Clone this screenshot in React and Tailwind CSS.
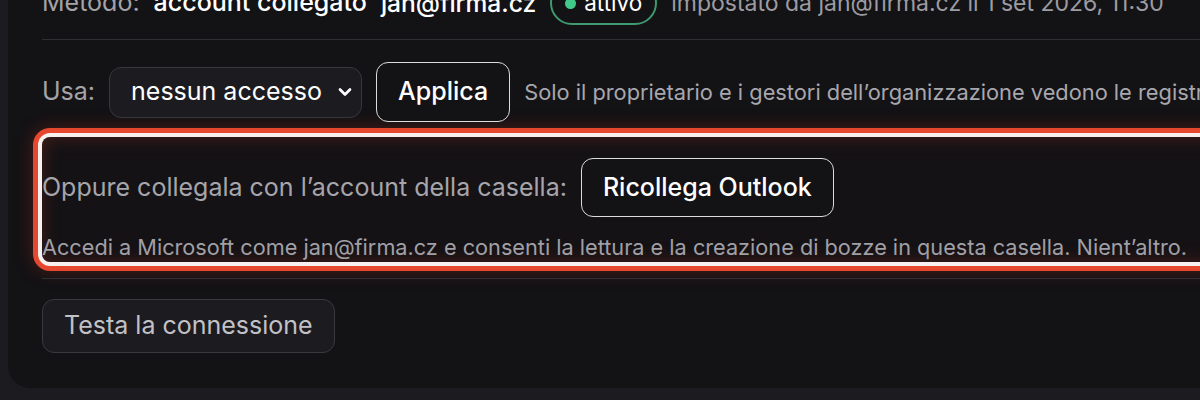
import React from "react";
import { ChevronDown } from "lucide-react";

const font = { fontFamily: "Inter, 'Noto Sans', sans-serif" };

const App = () => {
    return (
        <div className="h-[400px] w-[1200px] overflow-hidden bg-[#1c1b20]" style={font}>
            <div className="ml-[8px] -mt-[30px] w-[1400px] rounded-[22px] bg-[#131215] pl-[34px] pb-[35px]">
                {/* method row */}
                <div className="flex h-[70px] items-center gap-[14px] pb-[3px] border-b border-[#2f2e33]">
                    <span className="shrink-0 text-[25px] text-[#a3a3a8]">Metodo:</span>
                    <span className="shrink-0 text-[25px] font-medium text-white">account collegato</span>
                    <span className="shrink-0 text-[24.6px] font-medium text-white">jan@firma.cz</span>
                    <span className="flex h-[44px] shrink-0 items-center gap-[8px] rounded-full border-2 border-[#3f9a70] px-[13px] text-[22.5px] text-white">
                        <span className="h-[11px] w-[11px] rounded-full bg-[#41c98a]" />
                        attivo
                    </span>
                    <span className="whitespace-nowrap text-[23px] text-[#9d9ca2]">impostato da jan@firma.cz il 1 set 2026, 11:30</span>
                </div>

                {/* access row */}
                <div className="flex items-center gap-[14px] pt-[22px]">
                    <span className="shrink-0 text-[25px] text-[#a3a3a8]">Usa:</span>
                    <div className="flex h-[51px] w-[253px] shrink-0 items-center justify-between rounded-[12px] border border-[#38373c] bg-[#1c1b20] pl-[21px] pr-[6px] text-[25px] text-white">
                        nessun accesso
                        <ChevronDown size={20} strokeWidth={3.2} />
                    </div>
                    <button className="h-[60px] shrink-0 rounded-[12px] border-[1.5px] border-[#dcdcdc] bg-[#131215] px-[21px] text-[25px] font-medium text-white">
                        Applica
                    </button>
                    <span className="whitespace-nowrap text-[21.8px] text-[#a8a7ad]">
                        Solo il proprietario e i gestori dell’organizzazione vedono le registrazioni delle chiamate.
                    </span>
                </div>

                {/* highlighted relink section */}
                <div className="mt-[15px] rounded-[8px] bg-[#141215] pt-[21px] pb-[1px] shadow-[0_0_0_4px_#f6f1ee,0_0_0_9px_#e5482f,0_0_18px_9px_rgba(180,50,30,0.35),inset_0_0_18px_rgba(200,60,40,0.28)]">
                    <div className="flex items-center gap-[14px]">
                        <span className="shrink-0 text-[25px] text-[#a6a5ab]">Oppure collegala con l’account della casella:</span>
                        <button className="h-[59px] shrink-0 rounded-[12px] border-[1.5px] border-[#dcdcdc] bg-[#131215] px-[21px] text-[25px] font-medium text-white">
                            Ricollega Outlook
                        </button>
                    </div>
                    <p className="mt-[16px] whitespace-nowrap text-[21.7px] leading-[28px] text-[#a0a0a6]">
                        Accedi a Microsoft come jan@firma.cz e consenti la lettura e la creazione di bozze in questa casella. Nient’altro.
                    </p>
                </div>

                <div className="mt-[16px] border-t border-[#2f2e33] pt-[20px]">
                    <button className="h-[54px] rounded-[12px] border border-[#3a393f] bg-[#1c1b20] px-[21px] text-[25px] text-[#c2c1c6]">
                        Testa la connessione
                    </button>
                </div>
            </div>
        </div>
    );
};

export default App;
